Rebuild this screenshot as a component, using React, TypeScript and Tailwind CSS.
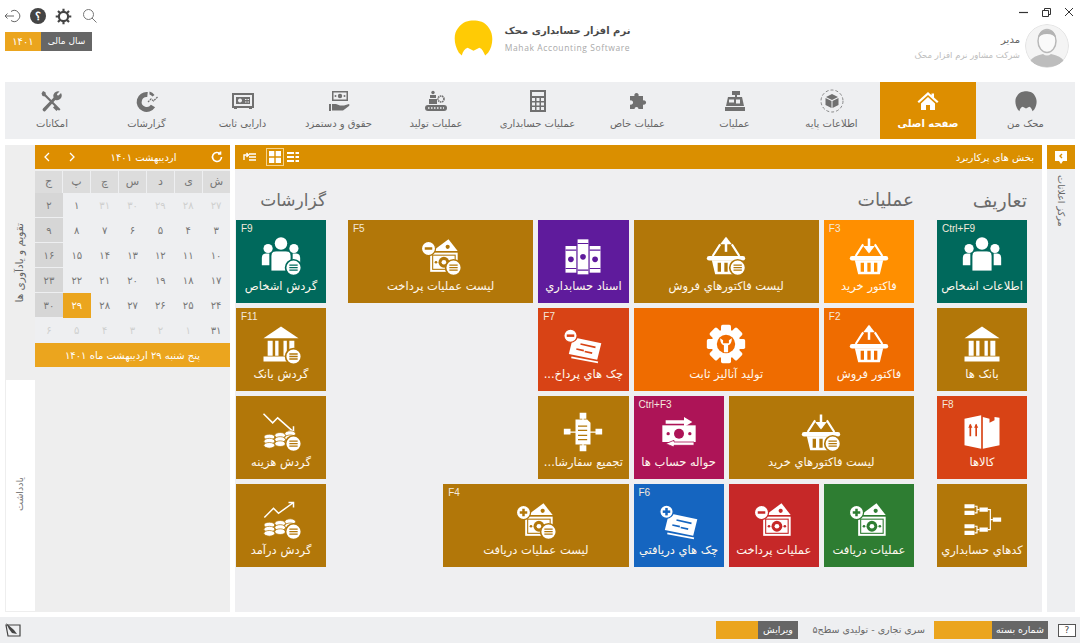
import type { ReactNode } from "react";

type IconProps = { tone: string };

const gray = "#707070";

// small list badge that sits on the lower corner of report icons
function Badge({ tone, cx = 38, cy = 38 }: IconProps & { cx?: number; cy?: number }) {
  return (
    <g>
      <circle cx={cx} cy={cy} r="9.5" fill="#fff" stroke={tone} strokeWidth="2" />
      <path d={`M${cx - 5} ${cy - 3}h10M${cx - 5} ${cy}h10M${cx - 5} ${cy + 3}h10`} stroke={tone} strokeWidth="1.6" />
    </g>
  );
}

function Svg({ children, size = 40 }: { children: ReactNode; size?: number }) {
  return (
    <svg viewBox="0 0 48 48" width={size} height={size} fill="#fff">
      {children}
    </svg>
  );
}

function People({ tone, badge }: IconProps & { badge?: boolean }) {
  return (
    <Svg>
      <circle cx="24" cy="9" r="7.5" />
      <circle cx="8.5" cy="15" r="5.5" />
      <circle cx="39.5" cy="15" r="5.5" />
      <path d="M1 35V26q0-5 5-5h4v14zM47 35V26q0-5-5-5h-4v14z" />
      <path d="M12 42V24q0-6 6-6h12q6 0 6 6v18z" stroke={tone} strokeWidth="1" />
      {badge && <Badge tone={tone} cx={39} cy={38} />}
    </Svg>
  );
}

function Basket({ tone, dir, badge }: IconProps & { dir: "up" | "down"; badge?: boolean }) {
  return (
    <Svg>
      <path d="M8 24 17 10M40 24 31 10" stroke="#fff" strokeWidth="2.6" fill="none" />
      <path d="M24 3v16" stroke="#fff" strokeWidth="3" fill="none" />
      {dir === "up" ? <path d="M17 10 24 1l7 9z" /> : <path d="M17 12l7 9 7-9z" />}
      <rect x="1" y="24" width="46" height="5.5" rx="2.7" />
      <path d="M7 29h34l-4 17H11z" />
      <path d="M14 32h4v11h-4zM22 32h4v11h-4zM30 32h4v11h-4z" fill={tone} />
      {badge && <Badge tone={tone} cx={38} cy={38} />}
    </Svg>
  );
}

function Bank({ tone, badge }: IconProps & { badge?: boolean }) {
  return (
    <Svg>
      <path d="M24 3 45 17H3z" />
      <path d="M8 20h6v18H8zM17 20h4v18h-4zM27 20h4v18h-4zM34 20h6v18h-6z" />
      <rect x="3" y="39" width="42" height="6" />
      {badge && <Badge tone={tone} cx={39} cy={39} />}
    </Svg>
  );
}

function Money({ tone, sign, badge }: IconProps & { sign: "plus" | "minus"; badge?: boolean }) {
  return (
    <Svg>
      <path d="M14 18 33 4l11 14z" />
      <circle cx="32" cy="13" r="2.5" fill={tone} />
      <rect x="11" y="20" width="33" height="23" />
      <rect x="14" y="23" width="27" height="17" fill="none" stroke={tone} strokeWidth="1.3" />
      <circle cx="27.5" cy="31.5" r="6.500" fill={tone} />
      <circle cx="27.5" cy="31.500" r="2.800" />
      <circle cx="18" cy="31.5" r="1.6" fill={tone} />
      <circle cx="37" cy="31.5" r="1.6" fill={tone} />
      <circle cx="9" cy="15" r="8.5" stroke={tone} strokeWidth="1.5" />
      <path d="M4.5 13.5h9v3h-9z" fill={tone} />
      {sign === "plus" && <path d="M7.5 10.5h3v9h-3z" fill={tone} />}
      {badge && <Badge tone={tone} cx={39} cy={38} />}
    </Svg>
  );
}

function Cheque({ tone, sign }: IconProps & { sign: "plus" | "minus" }) {
  return (
    <Svg>
      <path d="M12 16 46 23l-5 20-34-7z" />
      <path d="M21 24 39 28M26 33l9 2M16 30l9 2" stroke={tone} strokeWidth="2" />
      <path d="M10 40 42 46" stroke="#fff" strokeWidth="2" />
      <circle cx="9" cy="14" r="8" stroke={tone} strokeWidth="1.5" />
      <path d="M4.5 12.5h9v3h-9z" fill={tone} />
      {sign === "plus" && <path d="M7.5 9.5h3v9h-3z" fill={tone} />}
    </Svg>
  );
}

function Books({ tone }: IconProps) {
  return (
    <Svg>
      {[
        [3, 12, 13, 32],
        [17.5, 4, 13, 42],
        [32, 12, 13, 32],
      ].map(([x, y, w, h]) => (
        <g key={x}>
          <rect x={x} y={y} width={w} height={h} />
          <path d={`M${x} ${y + 5}h${w}M${x} ${y + h - 5}h${w}`} stroke={tone} strokeWidth="1.4" />
          <circle cx={x + w / 2} cy={y + h / 2} r="3.4" fill={tone} />
        </g>
      ))}
    </Svg>
  );
}

function GearWrench({ tone }: IconProps) {
  return (
    <Svg>
      {[0, 45, 90, 135].map((a) => (
        <rect key={a} x="18" y="1" width="12" height="46" rx="2" transform={`rotate(${a} 24 24)`} />
      ))}
      <circle cx="24" cy="24" r="17.5" />
      <circle cx="24" cy="24" r="11" fill={tone} />
      <path d="M17 17q0 7 4.5 8.5V34h5v-8.500Q31 24 31 17l-3.500 2.500V23h-7v-3.500z" />
    </Svg>
  );
}

function Transfer({ tone }: IconProps) {
  return (
    <Svg>
      <path d="M30 6 40 12 30 18v-4H8v-4h22z" />
      <rect x="4" y="16" width="40" height="20" />
      <circle cx="24" cy="26" r="6" fill={tone} />
      <circle cx="11" cy="26" r="2" fill={tone} />
      <circle cx="37" cy="26" r="2" fill={tone} />
      <path d="M18 42 8 38l10-4v2h24v4H18z" stroke={tone} strokeWidth="1" />
    </Svg>
  );
}

function Merge({ tone }: IconProps) {
  return (
    <Svg>
      <path d="M4 24h40M24 4v40" stroke="#fff" strokeWidth="1.5" />
      <path d="M15 9h14l4 4v26H15z" />
      <path d="M18 17h11M18 22h11M18 28h11M18 33h11" stroke={tone} strokeWidth="1.5" />
      <path d="M20 1h8v7h-8zM20 40h8v7h-8zM1 20h8v7H1zM39 20h8v7h-8z" />
    </Svg>
  );
}

function BoxIcon({ tone }: IconProps) {
  return (
    <Svg>
      <path d="M3 8 23 4v40L3 40zM25 6l8 2v5l6-3v-4l6 1v33l-20 4z" />
      <path d="M10 15v14M17 15v14" stroke={tone} strokeWidth="2" />
      <path d="M7.500 19 10 14l2.500 5zM14.500 19 17 14l2.500 5z" fill={tone} />
    </Svg>
  );
}

function Tree() {
  return (
    <Svg>
      <path d="M3 5h12v5H3zM3 13h12v5H3zM3 29h12v5H3zM3 37h12v5H3zM21 9h10v5H21zM21 33h10v5H21zM37 21h10v5H37z" />
      <path d="M15 7.500h3v8h-3M18 11.500h3M15 31.500h3v8h-3M18 35.500h3M31 11.500h3v24h-3M34 23.500h3" fill="none" stroke="#fff" strokeWidth="1.4" />
    </Svg>
  );
}

function Coins({ tone, trend }: IconProps & { trend: "up" | "down" }) {
  return (
    <Svg>
      {trend === "down" ? (
        <path d="M3 2 14 13l6-6 18 16M33 23h6v-6" fill="none" stroke="#fff" strokeWidth="1.8" />
      ) : (
        <path d="M4 21 15 10l6 6L39 3M33 3h6v6" fill="none" stroke="#fff" strokeWidth="1.8" />
      )}
      {[
        [10, 30],
        [23, 28],
        [35, 26],
      ].map(([cx, cy]) => (
        <g key={cx}>
          {[0, 5, 10].map((d) => (
            <ellipse key={d} cx={cx} cy={cy + d} rx="6.500" ry="3.400" stroke={tone} strokeWidth="0.9" />
          ))}
        </g>
      ))}
      <Badge tone={tone} cx={39} cy={38} />
    </Svg>
  );
}

/* ---------- nav icons ---------- */

const hair =
  "M5 33C0 25-1 14 4 8 9 1 15 0 20 0c5 0 12 1 16 8 5 7 4 18-1 25l-3 3c-2-4-3-7-6-8l-6 3-6-3c-3 1-5 4-6 8z";

function NavIcon({ name, color = gray }: { name: string; color?: string }) {
  const box = "0 0 24 24";
  const p = { width: 24, height: 24, viewBox: box, fill: color };
  switch (name) {
    case "mahak":
      return (
        <svg width={22} height={21} viewBox="0 0 40 37" fill={color}>
          <path d={hair} />
        </svg>
      );
    case "home":
      return (
        <svg {...p}>
          <path d="M12 3 1.500 12.500 3 14l9-8 9 8 1.500-1.500L18 8.500V4.500h-2.500v1.700z" />
          <path d="M5 14.500 12 8l7 6.500V21h-5v-5h-4v5H5z" />
        </svg>
      );
    case "cube":
      return (
        <svg {...p}>
          <circle cx="12" cy="12" r="11" fill="none" stroke={color} strokeWidth="0.8" strokeDasharray="3 2" />
          <path d="M12 5 18 8l-6 3-6-3zM5.500 9l6 3v7l-6-3zM18.500 9l-6 3v7l6-3z" />
        </svg>
      );
    case "register":
      return (
        <svg {...p}>
          <path d="M9 2h8v4h-3v2h-2V6H9z" />
          <path d="M5 8h14l2 9H3z" />
          <path d="M6 10.500h5v3H6zM13 10.500h4v4h-4z" fill="#eeeff1" />
          <rect x="2" y="18" width="20" height="4" />
        </svg>
      );
    case "puzzle":
      return (
        <svg {...p}>
          <path d="M4 7h4.500a2.200 2.200 0 1 1 4 0H17v4.500a2.200 2.200 0 1 1 0 4V20H12.500a2 2 0 1 0-4 0H4v-4.500a2.200 2.200 0 1 0 0-4z" />
        </svg>
      );
    case "calc":
      return (
        <svg width={18} height={24} viewBox="0 0 18 24" fill={color}>
          <path fillRule="evenodd" d="M1 1h16v22H1zM3 3v4h12V3zM3 9v3h3V9zm4.500 0v3h3V9zM12 9v3h3V9zM3 13.500v3h3v-3zm4.500 0v3h3v-3zm4.500 0v3h3v-3zM3 18v3h3v-3zm4.500 0v3h3v-3zm4.500 0v3h3v-3z" />
        </svg>
      );
    case "production":
      return (
        <svg {...p}>
          <circle cx="17" cy="10" r="3" fill="none" stroke={color} strokeWidth="1.600" strokeDasharray="1.500 0.600" />
          <circle cx="9" cy="3.500" r="1.700" />
          <path d="M6 6h6v3H6zM5 10h8v5H5z" />
          <rect x="1" y="16" width="22" height="6" rx="3" />
          <path d="M4 19h16" stroke="#eeeff1" strokeWidth="1.500" strokeDasharray="1.500 1.500" />
        </svg>
      );
    case "hand":
      return (
        <svg {...p}>
          <path fillRule="evenodd" d="M5 2h16v10H5zM6.500 3.500v7h13v-7z" />
          <circle cx="13" cy="7" r="2.200" />
          <circle cx="8.500" cy="7" r="1" />
          <circle cx="17.500" cy="7" r="1" />
          <path d="M2 15h2v7H2zM5 15h4l4 1.500h4l5-1.500q1 1 0 2l-6 4.500H5z" />
        </svg>
      );
    case "safe":
      return (
        <svg {...p}>
          <path fillRule="evenodd" d="M1 4h22v15h-2v1h-3v-1H6v1H3v-1H1zM3 6v11h18V6z" />
          <path fillRule="evenodd" d="M5 8h14v7H5zM9 9.500a2 2 0 1 0 .01 0zM14 10v1h1.500v-1zm2.500 0v1H18v-1zM14 12.500v1h1.500v-1zm2.500 0v1H18v-1z" />
        </svg>
      );
    case "chart":
      return (
        <svg {...p}>
          <path d="M12.500 5.500A7.500 7.500 0 1 0 18 17" fill="none" stroke={color} strokeWidth="5" />
          <path d="M13 13l3-3 2.500 2L22.500 8" fill="none" stroke={color} strokeWidth="1.300" strokeDasharray="2 0.800" />
          <path d="M14.500 2.500a9 9 0 0 1 5 3.500l-2 1.500q-1.500-1.500-3-2z" />
        </svg>
      );
    default:
      return (
        <svg {...p}>
          <path d="M3 2 5.500 3.200l.4 2.300 14.600 14.800-1.500 1.500L4.800 7.400 2.500 7 1.500 4.500zM15 20.500l-2-2 2-2 3.500 3.500-2 2z" />
          <path d="M21 4 18.500 6.500l-1.300-.3L17 5l2.500-2.400a4.800 4.800 0 0 0-6 6.200L3 19.500a1.700 1.700 0 0 0 2.400 2.400L15.300 11A4.800 4.800 0 0 0 21 4z" />
        </svg>
      );
  }
}

const navItems = [
  { label: "محک من", icon: "mahak", w: "w-[99px]" },
  { label: "صفحه اصلی", icon: "home", w: "w-[96px]", active: true },
  { label: "اطلاعات پایه", icon: "cube", w: "w-[97px]" },
  { label: "عملیات", icon: "register", w: "w-[97px]" },
  { label: "عملیات خاص", icon: "puzzle", w: "w-[97px]" },
  { label: "عملیات حسابداری", icon: "calc", w: "w-[103px]" },
  { label: "عملیات تولید", icon: "production", w: "w-[100px]" },
  { label: "حقوق و دستمزد", icon: "hand", w: "w-[95px]" },
  { label: "دارایی ثابت", icon: "safe", w: "w-[97px]" },
  { label: "گزارشات", icon: "chart", w: "w-[95px]" },
  { label: "امکانات", icon: "tools", w: "w-[94px]" },
];

function TopBar() {
  return (
    <header className="flex h-[82px] shrink-0">
      <div className="flex flex-1 flex-col items-start">
        <div dir="ltr" className="flex h-[24px] w-full items-center justify-end gap-[12px] pr-[6px] pt-[0px]">
          <svg width="9" height="9" viewBox="0 0 9 9" stroke="#333" fill="none" className="mx-[1px]">
            <path d="M0 4.500h9" strokeWidth="1.200" />
          </svg>
          <svg width="9" height="9" viewBox="0 0 9 9" stroke="#333" fill="none" className="mx-[1px]">
            <path d="M.5 2.500h6v6h-6zM2.500 2.500v-2h6v6h-2" />
          </svg>
          <svg width="10" height="10" viewBox="0 0 10 10" stroke="#333" fill="none">
            <path d="m1 1 8 8M9 1 1 9" />
          </svg>
        </div>
        <div className="flex items-center gap-[5px] pr-[11px]">
          <svg width="44" height="44" viewBox="0 0 44 44" className="rounded-full">
            <circle cx="22" cy="22" r="21.500" fill="#f4f4f4" stroke="#e2e2e2" />
            <ellipse cx="22" cy="17" rx="9" ry="11.500" fill="#fafafa" stroke="#b9b9b9" strokeWidth="1.500" />
            <path d="M13 15q0-9 9-9t9 9q-2-5-9-5t-9 5z" fill="#b4b4b4" />
            <path d="M5 37q3-5 13-7 4 3 8 0 10 2 13 7-7 6-17 6T5 37z" fill="#bdbdbd" />
          </svg>
          <div className="flex flex-col gap-[3px] pt-[2px]">
            <span className="text-[10px] leading-[13px] text-[#666]">مدیر</span>
            <span className="text-[8.500px] leading-[12px] text-[#bdbdbd]">شرکت مشاور نرم افزار محک</span>
          </div>
        </div>
      </div>

      <div dir="ltr" className="flex items-center gap-[11px] pb-[6px]">
        <svg width="39" height="37" viewBox="0 0 40 37" fill="#ffcb05">
          <path d={hair} />
        </svg>
        <div className="flex w-[127px] flex-col items-center gap-[3px]">
          <span dir="rtl" className="text-[10px] font-bold leading-[16px] whitespace-nowrap text-[#4a4a4a]">
            نرم افزار حسابداری محک
          </span>
          <span className="font-['Open_Sans',sans-serif] text-[8.5px] leading-[11px] tracking-[0.6px] whitespace-nowrap text-[#a9a9a9]">
            Mahak Accounting Software
          </span>
        </div>
      </div>

      <div dir="ltr" className="flex flex-1 flex-col items-start pl-[5px] pt-[7px]">
        <div className="flex h-[18px] items-center gap-[9px]">
          <svg width="16" height="16" viewBox="0 0 16 16" fill="none" stroke="#666" strokeWidth="1">
            <path d="M6 3.500a5.500 5.500 0 1 1 0 9M0 8h9M2.500 5.500 0 8l2.500 2.500" />
          </svg>
          <span className="flex h-[16px] w-[16px] items-center justify-center rounded-full bg-[#444] font-['Liberation_Sans',sans-serif] text-[11px] font-bold text-white">
            ؟
          </span>
          <svg width="17" height="17" viewBox="0 0 24 24" fill="none" stroke="#444" strokeWidth="3">
            <circle cx="12" cy="12" r="6.500" />
            <path d="M12 1v4M12 19v4M1 12h4M19 12h4M4.200 4.200l2.900 2.900M16.900 16.900l2.900 2.900M4.200 19.800l2.900-2.900M16.900 7.100l2.900-2.900" />
          </svg>
          <svg width="14" height="14" viewBox="0 0 14 14" fill="none" stroke="#777" strokeWidth="1" className="ml-[2px]">
            <circle cx="5.500" cy="5.500" r="5" />
            <path d="m9 9 4.500 4.500" />
          </svg>
        </div>
        <div className="mt-[7px] flex h-[19px] w-[87px]">
          <span className="flex w-[36px] items-center justify-center bg-[#eba51e] text-[10px] text-white">۱۴۰۱</span>
          <span className="flex flex-1 items-center justify-center bg-[#666] text-[9px] text-white">سال مالی</span>
        </div>
      </div>
    </header>
  );
}

function NavBar() {
  return (
    <nav className="mx-[5px] flex h-[57px] shrink-0 bg-[#eeeff1]">
      {navItems.map((item) => (
        <div
          key={item.label}
          className={`flex ${item.w} flex-col items-center pt-[7px] ${item.active ? "bg-[#dd8e00]" : ""}`}
        >
          <span className="flex h-[24px] items-center">
            <NavIcon name={item.icon} color={item.active ? "#fff" : gray} />
          </span>
          <span
            className={`mt-[4px] text-[10px] leading-[14px] whitespace-nowrap ${
              item.active ? "font-bold text-white" : "text-[#666]"
            }`}
          >
            {item.label}
          </span>
        </div>
      ))}
    </nav>
  );
}

const weekdays = ["ش", "ی", "د", "س", "چ", "پ", "ج"];
const days = [
  ["۲۷", "۲۸", "۲۹", "۳۰", "۳۱", "۱", "۲"],
  ["۳", "۴", "۵", "۶", "۷", "۸", "۹"],
  ["۱۰", "۱۱", "۱۲", "۱۳", "۱۴", "۱۵", "۱۶"],
  ["۱۷", "۱۸", "۱۹", "۲۰", "۲۱", "۲۲", "۲۳"],
  ["۲۴", "۲۵", "۲۶", "۲۷", "۲۸", "۲۹", "۳۰"],
  ["۳۱", "۱", "۲", "۳", "۴", "۵", "۶"],
];

function isMuted(row: number, col: number) {
  return (row === 0 && col < 5) || (row === 5 && col > 0);
}

function Calendar() {
  return (
    <section className="flex w-[195px] flex-col bg-[#eeeeee]">
      <div dir="ltr" className="flex h-[24px] items-center bg-[#dd8e00] text-white">
        <svg width="8" height="10" viewBox="0 0 8 10" fill="none" stroke="#fff" strokeWidth="1.300" className="ml-[8px]">
          <path d="M6 1 2 5l4 4" />
        </svg>
        <svg width="8" height="10" viewBox="0 0 8 10" fill="none" stroke="#fff" strokeWidth="1.300" className="ml-[17px]">
          <path d="m2 1 4 4-4 4" />
        </svg>
        <span dir="rtl" className="flex-1 text-center text-[10px]">
          اردیبهشت ۱۴۰۱
        </span>
        <svg width="12" height="12" viewBox="0 0 12 12" fill="none" stroke="#fff" strokeWidth="1.600" className="mr-[7px]">
          <path d="M10.500 6a4.500 4.500 0 1 1-1.300-3.200M9.500 0.500v2.500H7" />
        </svg>
      </div>
      <div className="mt-[2px] grid h-[22px] grid-cols-7 gap-x-px bg-[#eeeff1]">
        {weekdays.map((d) => (
          <span key={d} className="flex items-center justify-center bg-[#dcdcdc] text-[11px] text-[#777]">
            {d}
          </span>
        ))}
      </div>
      <div className="grid grid-cols-7 bg-[#eeeff1]">
        {days.map((row, r) =>
          row.map((d, c) => {
            const selected = r === 4 && c === 5;
            const friday = c === 6 && r < 5;
            let tone = "text-[#777]";
            if (selected) tone = "bg-[#eba51e] text-white";
            else if (friday) tone = "bg-[#d6d6d6] text-[#777] border-b border-[#eeeff1]";
            else if (isMuted(r, c)) tone = "text-[#cfcfcf]";
            return (
              <span key={`${r}-${c}`} className={`flex h-[25px] items-center justify-center text-[10px] ${tone}`}>
                {d}
              </span>
            );
          }),
        )}
      </div>
      <div className="flex h-[24px] items-center justify-center gap-[5px] bg-[#eba51e] text-[10px] text-white">
        پنج شنبه ۲۹ اردیبهشت ماه ۱۴۰۱
      </div>
    </section>
  );
}

function LeftRail() {
  return (
    <aside className="flex w-[30px] flex-col">
      <div className="flex h-[235px] items-center justify-center bg-[#eeeeee]">
        <span className="rotate-180 text-[10.500px] whitespace-nowrap text-[#666] [writing-mode:vertical-rl]">
          تقویم و یادآوری ها
        </span>
      </div>
      <div className="flex flex-1 items-center justify-center border-b border-l border-[#eeeeee] bg-white pb-[3px]">
        <span className="rotate-180 text-[9.500px] whitespace-nowrap text-[#777] [writing-mode:vertical-rl]">
          یادداشت
        </span>
      </div>
    </aside>
  );
}

type TileProps = {
  label: string;
  bg: string;
  shortcut?: string;
  cls?: string;
  icon: ReactNode;
};

function Tile({ label, bg, shortcut, cls = "", icon }: TileProps) {
  return (
    <div className={`relative flex h-[83px] flex-col items-center overflow-hidden ${bg} ${cls}`}>
      {shortcut && (
        <span
          dir="ltr"
          className="absolute left-[5px] top-[3px] font-['Liberation_Sans',sans-serif] text-[10px] leading-[12px] text-[#f4e9dc]"
        >
          {shortcut}
        </span>
      )}
      <span className="mt-[16px] flex h-[40px] items-center">{icon}</span>
      <span className="mt-[2px] text-[11.500px] leading-[16px] font-medium whitespace-nowrap text-[#fff8ee]">{label}</span>
    </div>
  );
}

const gold = "bg-[#b27709]";
const goldHex = "#b27709";

function Column({ title, titleSize, children }: { title: string; titleSize: string; children: ReactNode }) {
  return (
    <div className="flex flex-col">
      <h2 className={`h-[51px] pt-[19px] ${titleSize} leading-[24px] font-normal text-[#6b6b6b]`}>{title}</h2>
      {children}
    </div>
  );
}

function Board() {
  return (
    <div className="flex pr-[15px]">
      <Column title="تعاریف" titleSize="text-[19px]">
        <div className="flex w-[90px] flex-col gap-[5px]">
          <Tile label="اطلاعات اشخاص" bg="bg-[#00695c]" shortcut="Ctrl+F9" icon={<People tone="#00695c" />} />
          <Tile label="بانک ها" bg={gold} icon={<Bank tone={goldHex} />} />
          <Tile label="کالاها" bg="bg-[#d84315]" shortcut="F8" icon={<BoxIcon tone="#d84315" />} />
          <Tile label="کدهاي حسابداري" bg={gold} icon={<Tree />} />
        </div>
      </Column>

      <div className="mr-[23px]">
        <Column title="عملیات" titleSize="text-[18.500px]">
          <div className="grid w-[566px] grid-cols-6 gap-[5px]">
            <Tile label="فاکتور خرید" bg="bg-[#ff8f00]" shortcut="F3" icon={<Basket tone="#ff8f00" dir="down" />} />
            <Tile
              label="لیست فاکتورهاي فروش"
              bg={gold}
              cls="col-span-2"
              icon={<Basket tone={goldHex} dir="up" badge />}
            />
            <Tile label="اسناد حسابداري" bg="bg-[#5f1b9c]" icon={<Books tone="#5f1b9c" />} />
            <Tile
              label="لیست عملیات پرداخت"
              bg={gold}
              shortcut="F5"
              cls="col-span-2"
              icon={<Money tone={goldHex} sign="minus" badge />}
            />

            <Tile label="فاکتور فروش" bg="bg-[#ef6c00]" shortcut="F2" cls="col-start-1" icon={<Basket tone="#ef6c00" dir="up" />} />
            <Tile label="تولید آنالیز ثابت" bg="bg-[#ef6c00]" cls="col-span-2" icon={<GearWrench tone="#ef6c00" />} />
            <Tile label="چک هاي پرداخ..." bg="bg-[#d84315]" shortcut="F7" icon={<Cheque tone="#d84315" sign="minus" />} />

            <Tile
              label="لیست فاکتورهاي خرید"
              bg={gold}
              cls="col-span-2 col-start-1"
              icon={<Basket tone={goldHex} dir="down" badge />}
            />
            <Tile label="حواله حساب ها" bg="bg-[#ad1457]" shortcut="Ctrl+F3" icon={<Transfer tone="#ad1457" />} />
            <Tile label="تجمیع سفارشا..." bg={gold} icon={<Merge tone={goldHex} />} />

            <Tile label="عملیات دریافت" bg="bg-[#2e7d32]" cls="col-start-1" icon={<Money tone="#2e7d32" sign="plus" />} />
            <Tile label="عملیات پرداخت" bg="bg-[#c62828]" icon={<Money tone="#c62828" sign="minus" />} />
            <Tile label="چک هاي دریافتي" bg="bg-[#1565c0]" shortcut="F6" icon={<Cheque tone="#1565c0" sign="plus" />} />
            <Tile
              label="لیست عملیات دریافت"
              bg={gold}
              shortcut="F4"
              cls="col-span-2"
              icon={<Money tone={goldHex} sign="plus" badge />}
            />
          </div>
        </Column>
      </div>

      <div className="mr-[22px]">
        <Column title="گزارشات" titleSize="text-[17px]">
          <div className="flex w-[90px] flex-col gap-[5px]">
            <Tile label="گردش اشخاص" bg="bg-[#00695c]" shortcut="F9" icon={<People tone="#00695c" badge />} />
            <Tile label="گردش بانک" bg={gold} shortcut="F11" icon={<Bank tone={goldHex} badge />} />
            <Tile label="گردش هزینه" bg={gold} icon={<Coins tone={goldHex} trend="down" />} />
            <Tile label="گردش درآمد" bg={gold} icon={<Coins tone={goldHex} trend="up" />} />
          </div>
        </Column>
      </div>
    </div>
  );
}

function MainPanel() {
  return (
    <section className="flex w-[807px] flex-col bg-[#efeff1]">
      <div className="flex h-[24px] items-center justify-between bg-[#da8f00] pl-[8px] pr-[8px]">
        <span className="text-[10px] text-white">بخش های پرکاربرد</span>
        <div dir="ltr" className="flex items-center">
          <svg width="13" height="10" viewBox="0 0 13 10" fill="none" stroke="#fff" strokeWidth="1.400">
            <path d="M6 2h7M6 5h7M6 8h7M1 8V3h4M3.500 1 5.500 3l-2 2" />
          </svg>
          <span className="ml-[10px] flex h-[18px] w-[18px] items-center justify-center border border-[#f6d48f]">
            <svg width="12" height="12" viewBox="0 0 12 12" fill="#fff">
              <path d="M0 0h5.300v5.300H0zM6.700 0H12v5.300H6.700zM0 6.700h5.300V12H0zM6.700 6.700H12V12H6.700z" />
            </svg>
          </span>
          <svg width="12" height="10" viewBox="0 0 12 10" fill="#fff" className="ml-[3px]">
            <path d="M0 0h7v2H0zM8.500 0H12v2H8.500zM0 4h7v2H0zM8.500 4H12v2H8.500zM0 8h7v2H0zM8.500 8H12v2H8.500z" />
          </svg>
        </div>
      </div>
      <Board />
    </section>
  );
}

function RightRail() {
  return (
    <aside className="flex w-[28px] flex-col items-center bg-[#eeeff1]">
      <div className="flex h-[24px] w-full items-center justify-center bg-[#da8f00]">
        <svg width="12" height="13" viewBox="0 0 12 13">
          <path d="M0 0h12v10H8l-2 3-2-3H0z" fill="#fff" />
          <path d="M7 3 5 5l2 2" fill="none" stroke="#da8f00" strokeWidth="1.400" />
        </svg>
      </div>
      <span className="mt-[6px] text-[9.500px] whitespace-nowrap text-[#666] [writing-mode:vertical-rl]">مرکز اعلانات</span>
    </aside>
  );
}

function Footer() {
  return (
    <footer className="flex h-[26px] shrink-0 items-center bg-[#eeeff1] pr-[4px] pl-[5px]">
      <span className="ml-[10px] flex h-[13px] w-[18px] items-center justify-center border border-[#555] bg-white text-[9px] leading-none text-[#444]">
        ?
      </span>
      <span className="flex h-[18px] w-[56px] items-center justify-center bg-[#666] text-[9.500px] text-white">شماره بسته</span>
      <span className="h-[18px] w-[58px] bg-[#eba51e]" />
      <span className="mr-[9px] w-[127px] text-[9.500px] whitespace-nowrap text-[#666]">سری تجاری - تولیدی سطح۵</span>
      <span className="flex h-[18px] w-[40px] items-center justify-center bg-[#666] text-[9.500px] text-white">ویرایش</span>
      <span className="h-[18px] w-[42px] bg-[#eba51e]" />
      <svg width="16" height="16" viewBox="0 0 16 16" fill="none" className="mr-auto">
        <path d="M1 3h14v11H3z" stroke="#444" strokeWidth="1.200" />
        <path d="M1 1l8 7 3 4-5-1-3-4z" fill="#444" />
      </svg>
    </footer>
  );
}

export default function App() {
  return (
    <div
      dir="rtl"
      className="flex h-[643px] w-[1080px] flex-col overflow-hidden bg-white font-['DejaVu_Sans',sans-serif]"
    >
      <TopBar />
      <NavBar />
      <main className="mx-[5px] mt-[6px] flex h-[467px] gap-[5px]">
        <RightRail />
        <MainPanel />
        <div className="flex">
          <Calendar />
          <LeftRail />
        </div>
      </main>
      <div className="h-[5px]" />
      <Footer />
    </div>
  );
}
